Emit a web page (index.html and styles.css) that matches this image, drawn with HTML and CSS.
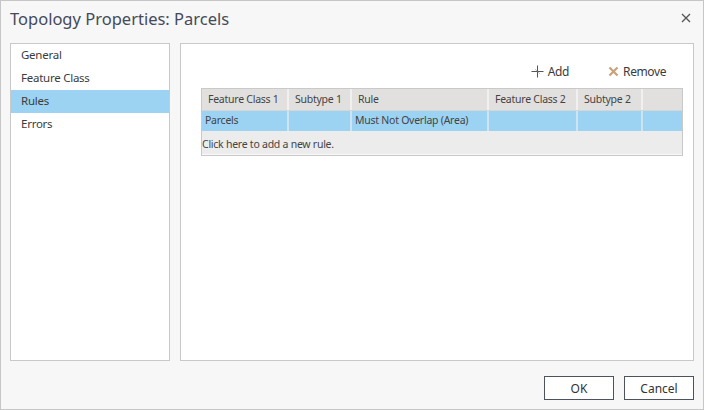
FILE: index.html
```html
<!DOCTYPE html>
<html>
<head>
<meta charset="utf-8">
<link rel="stylesheet" href="styles.css">
</head>
<body>
<div class="dialog">
  <div class="titlebar">
    <div class="title">Topology Properties: Parcels</div>
    <div class="close">
      <svg width="10" height="10" viewBox="0 0 10 10"><path d="M1 1 L9 9 M9 1 L1 9" stroke="#555" stroke-width="1.3" fill="none"/></svg>
    </div>
  </div>
  <div class="body">
    <div class="nav">
      <div class="nav-item">General</div>
      <div class="nav-item">Feature Class</div>
      <div class="nav-item selected">Rules</div>
      <div class="nav-item">Errors</div>
    </div>
    <div class="content">
      <div class="toolbar">
        <div class="tool">
          <svg width="13" height="13" viewBox="0 0 13 13"><path d="M6.5 0.5 V12.5 M0.5 6.5 H12.5" stroke="#555" stroke-width="1" fill="none"/><path d="M4 4 L9 9" stroke="#7a8a9a" stroke-width="0.8" fill="none" opacity="0.6"/></svg>
          <span>Add</span>
        </div>
        <div class="tool">
          <svg width="11" height="11" viewBox="0 0 11 11"><path d="M1.5 1.5 L9.5 9.5 M9.5 1.5 L1.5 9.5" stroke="#c8a27a" stroke-width="2.2" fill="none"/></svg>
          <span>Remove</span>
        </div>
      </div>
      <div class="grid">
        <div class="row head">
          <div class="cell c1">Feature Class 1</div>
          <div class="cell c2">Subtype 1</div>
          <div class="cell c3">Rule</div>
          <div class="cell c4">Feature Class 2</div>
          <div class="cell c5">Subtype 2</div>
          <div class="cell c6"></div>
        </div>
        <div class="row sel">
          <div class="cell c1">Parcels</div>
          <div class="cell c2"></div>
          <div class="cell c3">Must Not Overlap (Area)</div>
          <div class="cell c4"></div>
          <div class="cell c5"></div>
          <div class="cell c6"></div>
        </div>
        <div class="addrow">Click here to add a new rule.</div>
      </div>
    </div>
  </div>
  <div class="footer">
    <button class="btn">OK</button>
    <button class="btn">Cancel</button>
  </div>
</div>
</body>
</html>
```

FILE: styles.css
```css
* { box-sizing: border-box; }
html, body { margin: 0; padding: 0; }
body {
  width: 704px; height: 410px; overflow: hidden;
  font-family: "Noto Sans", "Open Sans", sans-serif;
  color: #333;
}
.dialog {
  width: 704px; height: 410px;
  background: #f6f7f6;
  border: 1px solid #c6c6c6;
  display: flex; flex-direction: column;
}
.titlebar {
  height: 42px;
  display: flex; align-items: center; justify-content: space-between;
  padding: 0 12px 0 9px;
}
.title {
  font-size: 16.5px; color: #454a5a;
  margin-top: -8px;
}
.close { display: flex; margin-top: -8px; }
.body {
  display: flex; gap: 10px;
  padding: 0 9px 0 9px;
  height: 318px;
}
.nav {
  width: 160px; height: 318px;
  background: #fff; border: 1px solid #c9c9c9;
}
.nav-item {
  height: 23px; line-height: 22px;
  padding-left: 10px;
  font-size: 11.5px; letter-spacing: -0.25px; color: #3b3b3b;
}
.nav-item.selected { background: #9dd3f2; }
.content {
  flex: 1; height: 318px;
  background: #fff; border: 1px solid #c9c9c9;
  padding: 14px 10px 0 20px;
}
.toolbar {
  display: flex; justify-content: flex-end; gap: 39px;
  height: 30px; align-items: center;
  padding-right: 17px; padding-bottom: 4px;
}
.tool { display: flex; align-items: center; gap: 4px; font-size: 12px; letter-spacing: -0.4px; color: #3b3b3b; }
.grid {
  width: 482px;
  border: 1px solid #c9c9c9;
}
.row { display: flex; }
.cell {
  height: 21px; line-height: 20px;
  padding-left: 6px;
  font-size: 10.5px; letter-spacing: -0.25px; color: #444;
  border-right: 2px solid #cfd0cf;
  white-space: nowrap; overflow: hidden;
}
.row.head .cell { background: #e1e0df; height: 21px; border-right-color: #f0f0f0; }
.row.head { border-bottom: 1px solid #d6d6d6; }
.row.sel .cell { background: #9dd3f2; height: 20px; line-height: 19px; padding-left: 3px; border-right-color: #cfe4f0; }
.c1 { width: 87px; }
.c2 { width: 63px; }
.c3 { width: 137px; }
.c4 { width: 89px; }
.c5 { width: 65px; }
.c6 { flex: 1; border-right: none !important; }
.addrow {
  background: #ececec; height: 24px; line-height: 26px;
  font-size: 10.5px; letter-spacing: -0.25px; color: #444;
  border-bottom: 1px solid #f8f8f8;
}
.footer {
  flex: 1;
  display: flex; justify-content: flex-end; align-items: flex-start;
  gap: 10px; padding: 15px 9px 0 0;
}
.btn {
  width: 70px; height: 24px;
  background: #fff; border: 1px solid #4d5260;
  font-family: "Noto Sans", "Open Sans", sans-serif;
  font-size: 12px; color: #333;
  padding: 0;
}
```
